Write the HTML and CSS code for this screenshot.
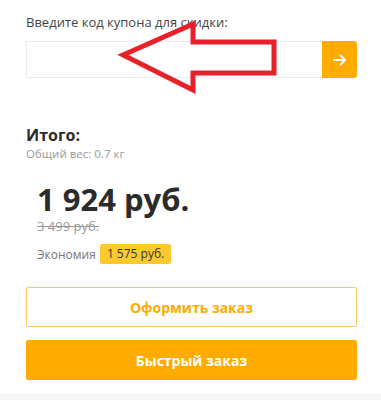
FILE: index.html
```html
<!DOCTYPE html>
<html lang="ru">
<head>
  <meta charset="UTF-8" />
  <meta name="viewport" content="width=device-width, initial-scale=1.0"/>
  <title>Корзина</title>
  <link rel="stylesheet" href="styles.css">
</head>
<body>
<div class="cart-summary">
    <div class="coupon">
      <label for="coupon">Введите код купона для скидки:</label>
      <div class="coupon-row">
        <input type="text" id="coupon" name="coupon" />
        <button type="button" class="btn-coupon" aria-label="Применить">
          <svg width="14" height="12" viewBox="0 0 14 12">
            <path d="M1 6h11M7.5 1.5 12 6l-4.5 4.5" fill="none" stroke="#fff" stroke-width="2" stroke-linecap="round" stroke-linejoin="round"/>
          </svg>
        </button>
      </div>
    </div>

    <div class="total">
      <h2>Итого:</h2>
      <div class="weight">Общий вес: 0.7 кг</div>

      <div class="prices">
        <div class="price">1 924 руб.</div>
        <div class="old-price">3 499 руб.</div>
        <div class="economy">
          Экономия <span class="economy-badge">1 575 руб.</span>
        </div>
      </div>
    </div>

    <div class="actions">
      <button type="button" class="btn-outline">Оформить заказ</button>
      <button type="button" class="btn-fast">Быстрый заказ</button>
    </div>
  </div>

  <div class="footer-line"></div>

  <!-- red annotation arrow drawn over the screenshot -->
  <svg class="annotation" width="381" height="110" viewBox="0 0 381 110">
    <polygon points="123,55 193,24 193,42 274,42 274,73 193,73 193,90"
      fill="none" stroke="#e8202a" stroke-width="5" stroke-linejoin="miter"/>
  </svg>
</body>
</html>
```

FILE: styles.css
```css
* {
  box-sizing: border-box;
  margin: 0;
  padding: 0;
}

body {
  font-family: "Open Sans", "Noto Sans", sans-serif;
  background: #fff;
  color: #333;
  position: relative;
}

.cart-summary {
  padding: 13px 24px 14px 26px;
}

.coupon label {
  display: block;
  font-size: 13px;
  line-height: 18px;
  color: #444;
  margin-bottom: 10px;
}

.coupon-row {
  display: flex;
  height: 37px;
}

.coupon-row input {
  flex: 1;
  border: 1px solid #ececec;
  border-right: none;
  font-size: 14px;
  padding: 0 10px;
  outline: none;
}

.btn-coupon {
  width: 35px;
  border: none;
  background: #ffab00;
  border-radius: 0 3px 3px 0;
  display: flex;
  align-items: center;
  justify-content: center;
  cursor: pointer;
}

.total {
  margin-top: 47px;
}

.total h2 {
  font-size: 16px;
  line-height: 20px;
  font-weight: 700;
  color: #2b2b2b;
}

.weight {
  margin-top: 1px;
  font-size: 11.5px;
  line-height: 16px;
  color: #9a9a9a;
}

.prices {
  padding-left: 11px;
  margin-top: 19px;
}

.price {
  font-size: 31px;
  line-height: 36px;
  font-weight: 700;
  color: #2b2b2b;
}

.old-price {
  margin-top: 1px;
  font-size: 13px;
  line-height: 16px;
  color: #999;
  text-decoration: line-through;
}

.economy {
  margin-top: 10px;
  display: flex;
  align-items: center;
  gap: 4px;
  font-size: 12px;
  color: #777;
}

.economy-badge {
  display: inline-block;
  background: #fdca2e;
  color: #333;
  border-radius: 2px;
  padding: 0 7px;
  line-height: 20px;
}

.actions {
  margin-top: 23px;
  display: flex;
  flex-direction: column;
  gap: 13px;
}

.actions button {
  height: 40px;
  font-family: inherit;
  font-size: 14px;
  font-weight: 700;
  border-radius: 2px;
  cursor: pointer;
}

.btn-outline {
  background: #fff;
  border: 1px solid #ffc766;
  color: #ffab00;
}

.btn-fast {
  background: #ffab00;
  border: none;
  color: #fff;
  height: 39px;
}

.footer-line {
  height: 6px;
  background: #f6f6f6;
}

.annotation {
  position: absolute;
  left: 0;
  top: 0;
  pointer-events: none;
}
```
